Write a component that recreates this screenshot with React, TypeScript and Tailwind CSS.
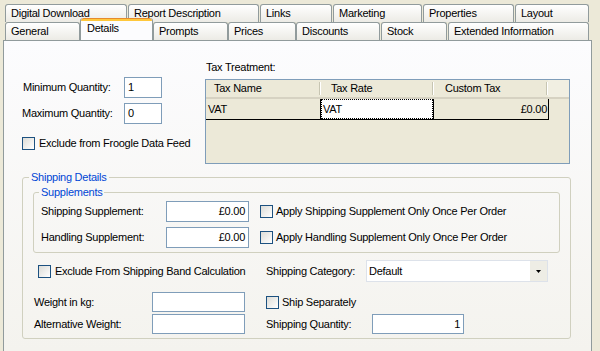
import * as React from 'react';

// XP-style product editor: "Details" tab of the product properties dialog.

const TOP_TABS = [
  { label: 'Digital Download', cls: 'w-[122px] ml-[5px]' },
  { label: 'Report Description', cls: 'w-[131px] ml-[1px]' },
  { label: 'Links', cls: 'w-[72px] ml-[1px]' },
  { label: 'Marketing', cls: 'w-[89px] ml-[1px]' },
  { label: 'Properties', cls: 'w-[91px] ml-[1px]' },
  { label: 'Layout', cls: 'w-[74px] ml-[1px]' },
];

const BOTTOM_TABS = [
  { label: 'General', cls: 'w-[75px] ml-[5px]' },
  { label: 'Details', cls: 'w-[73px]', active: true },
  { label: 'Prompts', cls: 'w-[75px]' },
  { label: 'Prices', cls: 'w-[68px]' },
  { label: 'Discounts', cls: 'w-[84px]' },
  { label: 'Stock', cls: 'w-[66px] ml-[1px]' },
  { label: 'Extended Information', cls: 'w-[141px] ml-[1px]' },
];

function Tab({ label, cls, active }: { label: string; cls: string; active?: boolean }) {
  if (active) {
    return (
      <div
        className={`relative z-10 -mt-[3px] h-[22px] shrink-0 overflow-hidden rounded-t-[3px] border-x border-[#919b9c] bg-[#fcfcfe] ${cls}`}
      >
        <div className="h-[3px] rounded-t-[3px] border-t border-[#e68b2c] bg-[#ffc83c]" />
        <div className="pl-[6px] leading-[15px]">{label}</div>
      </div>
    );
  }
  return (
    <div
      className={`h-full shrink-0 rounded-t-[3px] border border-b-0 border-[#919b9c] bg-linear-to-b from-white to-[#ecebe5] pl-[5px] leading-[17px] whitespace-nowrap ${cls}`}
    >
      {label}
    </div>
  );
}

function Checkbox() {
  return (
    <div className="h-[13px] w-[13px] shrink-0 border border-[#1c5180] bg-linear-to-br from-[#dcdcd7] to-white" />
  );
}

function Field({ value = '', cls, right }: { value?: string; cls: string; right?: boolean }) {
  return (
    <div
      className={`flex shrink-0 items-center border border-[#7f9db9] bg-white leading-[13px] ${
        right ? 'justify-end pr-[3px]' : 'pl-[3px]'
      } ${cls}`}
    >
      {value}
    </div>
  );
}

function HeaderSep() {
  return <div className="h-[13px] w-[2px] shrink-0 self-center border-l border-[#c7c5b2] border-r border-r-white" />;
}

function TaxGrid() {
  return (
    <div className="h-[85px] w-[365px] border border-[#7f9db9] bg-[#ece9d8]">
      <div className="flex h-[19px] border-b-2 border-[#d6d2c2] leading-[17px]">
        <div className="w-[113px] pl-[8px]">Tax Name</div>
        <HeaderSep />
        <div className="w-[111px] pl-[10px]">Tax Rate</div>
        <HeaderSep />
        <div className="w-[112px] pl-[11px]">Custom Tax</div>
        <HeaderSep />
        <div className="flex-1 bg-[#f1efe2]" />
      </div>
      <div className="flex h-[21px] w-[343px] border-b border-black leading-[20px]">
        <div className="w-[115px] border-r border-black pl-[2px]">VAT</div>
        <div className="w-[112px] border border-dotted border-black bg-white pl-[1px] leading-[18px]">VAT</div>
        <div className="w-[116px] border-x border-black pr-[1px] text-right">£0.00</div>
      </div>
    </div>
  );
}

export default function App() {
  return (
    <div className="h-[351px] w-[600px] overflow-hidden bg-[#ece9d8] font-['Liberation_Sans',Arial,sans-serif] text-[11px] tracking-[-0.25px] text-black">
      <div className="mt-[4px] flex h-[18px]">
        {TOP_TABS.map((t) => (
          <Tab key={t.label} label={t.label} cls={t.cls} />
        ))}
      </div>
      <div className="flex h-[18px] items-end">
        {BOTTOM_TABS.map((t) => (
          <Tab key={t.label} label={t.label} cls={t.cls} active={t.active} />
        ))}
      </div>

      <div className="ml-[3px] h-[311px] w-[589px] border-x border-t border-[#919b9c] bg-linear-to-b from-[#fcfcfe] to-[#f4f3ee] pl-[18px]">
        {/* top section */}
        <div className="flex">
          <div className="w-[183px] pt-[36px]">
            <div className="flex h-[21px] items-center">
              <div className="w-[102px] pl-[1px] leading-[13px]">Minimum Quantity:</div>
              <Field value="1" cls="h-[21px] w-[38px]" />
            </div>
            <div className="mt-[5px] flex h-[21px] items-center">
              <div className="w-[102px] leading-[13px]">Maximum Quantity:</div>
              <Field value="0" cls="h-[21px] w-[38px]" />
            </div>
            <div className="mt-[13px] flex items-center gap-[4px] leading-[13px]">
              <Checkbox />
              <span>Exclude from Froogle Data Feed</span>
            </div>
          </div>
          <div className="w-[365px] pt-[20px]">
            <div className="pl-[1px] leading-[13px]">Tax Treatment:</div>
            <div className="mt-[5px]">
              <TaxGrid />
            </div>
          </div>
        </div>

        {/* shipping details */}
        <fieldset className="mt-[7px] w-[549px] rounded-[3px] border border-[#d0d0bf] pb-[4px]">
          <legend className="ml-[6px] px-[2px] leading-[13px] text-[#0046d5]">Shipping Details</legend>

          <fieldset className="ml-[10px] mt-[2px] w-[527px] rounded-[3px] border border-[#d0d0bf] pb-[4px]">
            <legend className="ml-[5px] px-[2px] leading-[13px] text-[#0046d5]">Supplements</legend>
            <div className="mt-[2px] flex h-[21px] items-center pl-[7px] leading-[13px]">
              <div className="w-[125px]">Shipping Supplement:</div>
              <Field value="£0.00" right cls="h-[21px] w-[83px]" />
              <div className="ml-[11px] flex items-center gap-[3px]">
                <Checkbox />
                <span>Apply Shipping Supplement Only Once Per Order</span>
              </div>
            </div>
            <div className="mt-[5px] flex h-[21px] items-center pl-[7px] leading-[13px]">
              <div className="w-[125px]">Handling Supplement:</div>
              <Field value="£0.00" right cls="h-[21px] w-[83px]" />
              <div className="ml-[11px] flex items-center gap-[3px]">
                <Checkbox />
                <span>Apply Handling Supplement Only Once Per Order</span>
              </div>
            </div>
          </fieldset>

          <div className="mt-[7px] flex h-[22px] items-center leading-[13px]">
            <div className="flex w-[242px] items-center gap-[4px] pl-[15px]">
              <Checkbox />
              <span>Exclude From Shipping Band Calculation</span>
            </div>
            <div className="w-[101px] pl-[1px]">Shipping Category:</div>
            <div className="flex h-[22px] w-[182px] items-stretch border border-[#dde2ea] bg-white">
              <div className="flex flex-1 items-center pl-[2px]">Default</div>
              <div className="flex w-[17px] items-center justify-center bg-[#eeede5]">
                <svg width="5" height="3" viewBox="0 0 5 3">
                  <path d="M0 0h5L2.5 3z" fill="#000" />
                </svg>
              </div>
            </div>
          </div>

          <div className="mt-[10px] flex h-[20px] items-center leading-[13px]">
            <div className="flex w-[242px] items-center pl-[11px]">
              <div className="w-[118px]">Weight in kg:</div>
              <Field cls="h-[20px] w-[93px]" />
            </div>
            <div className="flex items-center gap-[3px] pl-[1px]">
              <Checkbox />
              <span>Ship Separately</span>
            </div>
          </div>

          <div className="mt-[2px] flex h-[20px] items-center leading-[13px]">
            <div className="flex w-[242px] items-center pl-[11px]">
              <div className="w-[118px]">Alternative Weight:</div>
              <Field cls="h-[20px] w-[93px]" />
            </div>
            <div className="w-[107px] pl-[1px]">Shipping Quantity:</div>
            <Field value="1" right cls="h-[20px] w-[92px]" />
          </div>
        </fieldset>
      </div>
    </div>
  );
}
